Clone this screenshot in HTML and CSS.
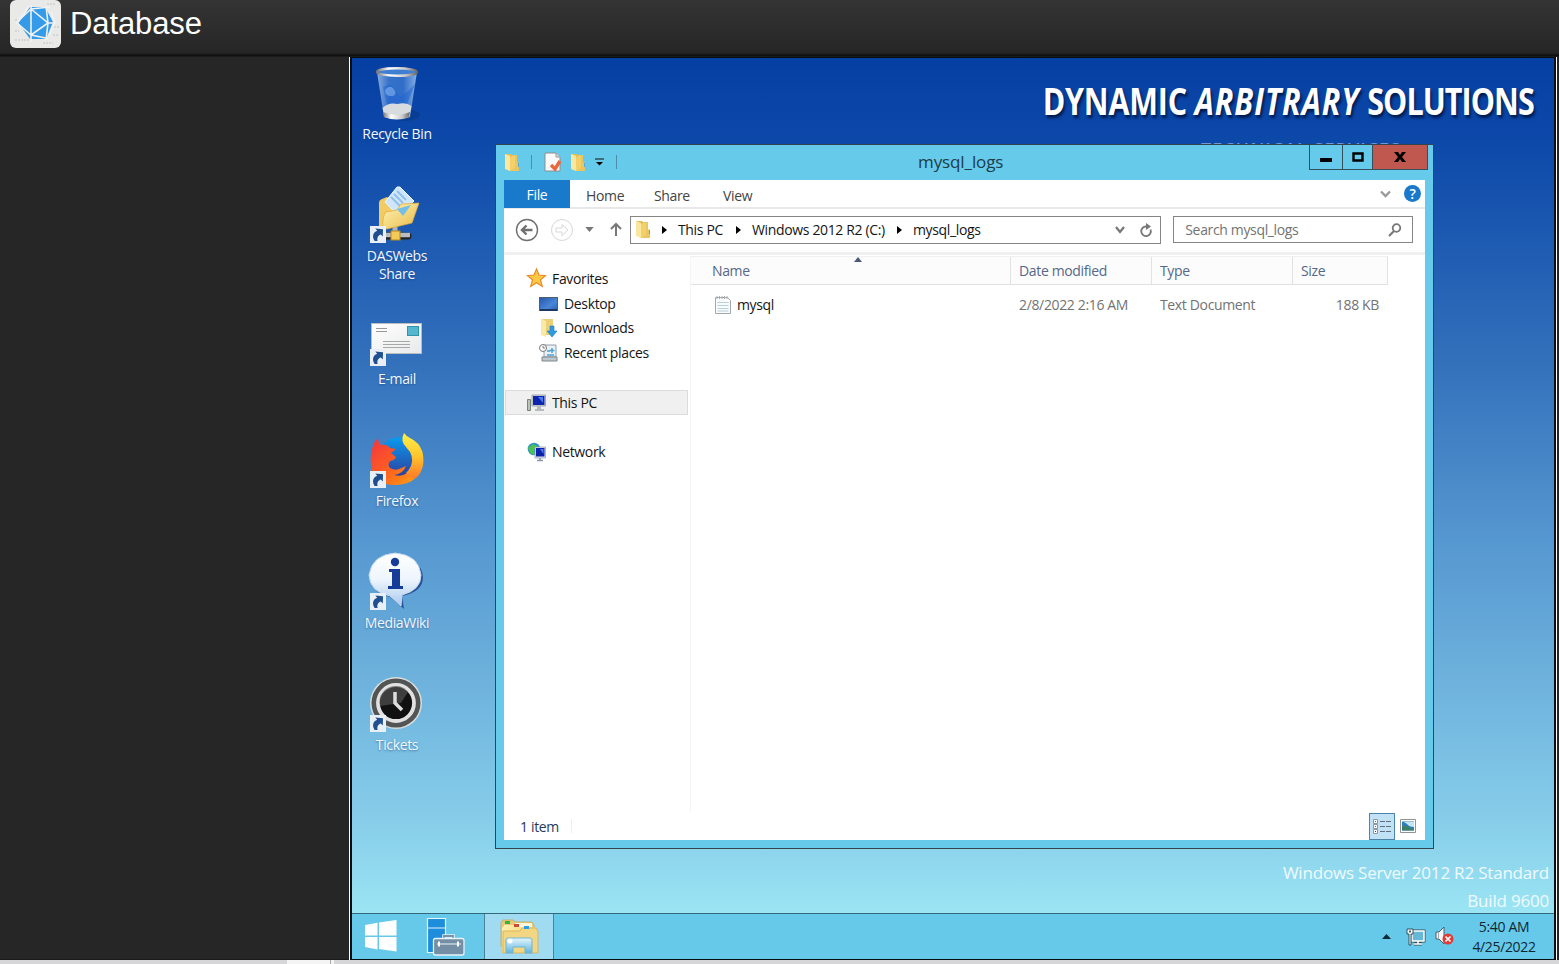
FILE: index.html
```html
<!DOCTYPE html>
<html lang="en">
<head>
<meta charset="utf-8">
<title>Database</title>
<link rel="stylesheet" href="styles.css">
</head>
<body>
<svg class="defs" width="0" height="0" aria-hidden="true">
  <defs>
    <linearGradient id="gold" x1="0" y1="0" x2="1" y2="1"><stop offset="0" stop-color="#fff3b4"/><stop offset="1" stop-color="#e8bb4a"/></linearGradient>
    <linearGradient id="steel" x1="0" y1="0" x2="1" y2="0"><stop offset="0" stop-color="#777"/><stop offset=".3" stop-color="#fff"/><stop offset=".7" stop-color="#ccc"/><stop offset="1" stop-color="#666"/></linearGradient>
    <linearGradient id="glass" x1="0" y1="0" x2="1" y2="0"><stop offset="0" stop-color="#a9c9ef" stop-opacity=".8"/><stop offset=".3" stop-color="#4a86d8" stop-opacity=".7"/><stop offset=".65" stop-color="#3a78d2" stop-opacity=".8"/><stop offset="1" stop-color="#a5caf2" stop-opacity=".8"/></linearGradient>
    <linearGradient id="paper" x1="0" y1="0" x2="1" y2="1"><stop offset="0" stop-color="#fff"/><stop offset="1" stop-color="#e8e9ea"/></linearGradient>
    <linearGradient id="fire" x1="0" y1="0" x2="1" y2="1"><stop offset="0" stop-color="#f0343f"/><stop offset=".45" stop-color="#ff5a25"/><stop offset=".7" stop-color="#ff7a18"/><stop offset="1" stop-color="#ffb31a"/></linearGradient>
    <linearGradient id="flame" x1="0" y1="0" x2="0" y2="1"><stop offset="0" stop-color="#fff14a"/><stop offset=".5" stop-color="#ffc62c"/><stop offset="1" stop-color="#ff7a28"/></linearGradient>
    <linearGradient id="globe" x1="0" y1="0" x2="0" y2="1"><stop offset="0" stop-color="#0a9bee"/><stop offset="1" stop-color="#2c3f9e"/></linearGradient>
    <linearGradient id="bubble" x1="0" y1="0" x2="0" y2="1"><stop offset="0" stop-color="#fff"/><stop offset=".5" stop-color="#eef5fd"/><stop offset="1" stop-color="#a9c9ee"/></linearGradient>
    <linearGradient id="screen" x1="0" y1="0" x2="1" y2="1"><stop offset="0" stop-color="#2457a8"/><stop offset=".6" stop-color="#4a86d8"/><stop offset="1" stop-color="#2a63b8"/></linearGradient>
    <linearGradient id="glassblue" x1="0" y1="0" x2="0" y2="1"><stop offset="0" stop-color="#e3f6ff"/><stop offset="1" stop-color="#5eb4df"/></linearGradient>
    <symbol id="shortcut" viewBox="0 0 16 17">
      <rect width="16" height="17" fill="#e9eff7"/>
      <path d="M4.600 15C1.800 10.500 3 6.300 7.200 4.800L5.300 2.600 13 3.200 12.800 10.600 10.800 8.400C8.200 9.200 6.800 11.500 7.600 15Z" fill="#1f4f8f"/>
    </symbol>
    <symbol id="folder" viewBox="0 0 16 19">
      <path d="M1 1h6l1 1h5v14H1z" fill="#e4bd57"/>
      <path d="M8 2h5v7l2 1v8H6z" fill="#e9c65f"/>
      <path d="M6 5l2-2h3v12l-5 3z" fill="#f4d06b"/>
      <path d="M1 1l5 2v15l-5-2z" fill="#fbe8a0"/>
      <path d="M14.500 10v4" stroke="#58a8d8"/>
    </symbol>
  </defs>
</svg>

<header class="topbar">
  <svg class="brand" viewBox="0 0 51 48">
    <rect width="51" height="48" rx="6" fill="#e9e9e7"/>
    <path d="M5 20h4M5 31h4M5 40h14M44 27h5M43 35h5M33 43h10M37 4h9" stroke="#d6d6d4" stroke-width="2" stroke-dasharray="2 1"/>
    <path d="M20 7h15l8 15-7 17H20L8.500 23z" fill="#359be9"/>
    <path d="M21 5v37M21 9l17 14-17 12M6 23l15-14 19-2M7 23l14 12 17 3.500M36 6l2 17-2 17M38 23h8M19 6L7 23M41 12l4 10-6 14" fill="none" stroke="#f0f2f2" stroke-width="1.600"/>
  </svg>
  <h1>Database</h1>
</header>

<main class="viewer">
  <aside class="gutter"></aside>
  <section class="screen">
    <div class="desktop">
      <div class="icons">
        <div class="shortcut">
          <svg viewBox="0 0 56 56">
            <ellipse cx="35" cy="49" rx="16" ry="6" fill="#07357f" opacity=".5"/>
            <path d="M8 6h40l-7 45q-12 5-26 0z" fill="url(#glass)"/>
            <path d="M14 21q8-5 12 2l5 8 8-6 7-7-8 20H18z" fill="#2264cf" opacity=".55"/>
            <path d="M16 24q6-7 10 1 2 5-4 5t-6-6z" fill="#79a9ec" opacity=".7"/>
            <path d="M13.500 42q6-6 15-4 9-2 14 2l-2 11q-12 4-25 0z" fill="#d9dcdf"/>
            <path d="M14 46q13 6 27 0l-1 5q-12 5-25 0z" fill="url(#steel)"/>
            <ellipse cx="28" cy="6" rx="20" ry="3.800" fill="#3f7fd3" stroke="url(#steel)" stroke-width="2.400"/>
          </svg>
          <span>Recycle Bin</span>
        </div>
        <div class="shortcut">
          <svg viewBox="0 0 56 56">
            <path d="M26 38v10" stroke="#aeb4ba" stroke-width="5"/>
            <path d="M17 48h22" stroke="#222" stroke-width="7" stroke-linecap="round"/>
            <path d="M14 47h27" stroke="#b9bcc0" stroke-width="4.500"/>
            <path d="M10 39V15q0-3 3-4l5-2 6 5 16 4v12z" fill="#f2cb62"/>
            <path d="M28-1h3l14 14-15 16L16 14z" fill="#cfe6fa" stroke="#e9f6ff"/>
            <path d="M28 3l9 9M25 6l9 9M22 9l9 9" stroke="#8fbfec" stroke-width="1.800"/>
            <path d="M14 40q-1-12 3-16l11-2 4-6 18-1-7 20-25 6z" fill="url(#gold)" stroke="#dca836" stroke-width=".7"/>
            <path d="M28 21l14-4-8 11z" fill="#73bfe9"/>
            <rect x="22" y="43" width="9" height="9" fill="#f2ca55" stroke="#b98a1f"/>
            <use href="#shortcut" x="1" y="38" width="16" height="17"/>
          </svg>
          <span>DASWebs<br>Share</span>
        </div>
        <div class="shortcut">
          <svg viewBox="0 0 56 56">
            <rect x="2.500" y="12.500" width="50" height="30" fill="url(#paper)" stroke="#b8bdc2"/>
            <path d="M7 17.500h11M7 20.500h11" stroke="#999" stroke-width="1"/>
            <path d="M14 30.500h27M14 33.500h27M14 36.500h27" stroke="#a8a8a8"/>
            <rect x="38.500" y="15.500" width="11" height="9" fill="#53b7cd" stroke="#2e95ad"/>
            <use href="#shortcut" x="1" y="38" width="16" height="17"/>
          </svg>
          <span>E-mail</span>
        </div>
        <div class="shortcut">
          <svg viewBox="0 0 56 56">
            <circle cx="30" cy="24" r="20" fill="url(#globe)"/>
            <path d="M3 17q1-8 6-12 0 5 3 7 6-1 9 3l6 1-5 4 5 4q-1 3-6 4-3 4 0 7 5 3 9 1l7-3q-3 8-12 9 13 3 18-8 4-12-2-21l7 3 5 9q0 27-27 27Q4 52 2 32 1 22 3 17z" fill="url(#fire)"/>
            <path d="M35 0q-4 8 2 14 9 9 5 19-2 4-5 7 4 6 10 5Q57 36 53.500 19 50 9 41 5 37 3 35 0z" fill="url(#flame)"/>
            <use href="#shortcut" x="1" y="38" width="16" height="17"/>
          </svg>
          <span>Firefox</span>
        </div>
        <div class="shortcut">
          <svg viewBox="0 0 56 56">
            <path d="M33 41l2 13-14-12Q2 38 2 22 4 2 28 0q24 3 26 22 0 15-21 19z" fill="#173a86" opacity=".75"/>
            <path d="M33 40l-1 11-11-10Q1 37 0 20 3 0 26-2q24 2 26 22 0 15-19 20z" fill="url(#bubble)" stroke="#c5d8ee"/>
            <circle cx="26" cy="7" r="4.200" fill="#173b98"/>
            <path d="M20 14h11v17h3v3H19v-3h4V17h-3z" fill="#173b98"/>
            <use href="#shortcut" x="1" y="38" width="16" height="17"/>
          </svg>
          <span>MediaWiki</span>
        </div>
        <div class="shortcut">
          <svg viewBox="0 0 56 56">
            <circle cx="27" cy="26" r="26" fill="#d9dcdc"/>
            <circle cx="27" cy="26" r="24.500" fill="#535554"/>
            <circle cx="27" cy="26" r="18" fill="#111" stroke="#e1e1e1" stroke-width="3.800"/>
            <path d="M11 29a16 16 0 0 1 28-14l-7 11z" fill="#515151" opacity=".7"/>
            <path d="M26 15v11l7 7" fill="none" stroke="#ddd" stroke-width="3.500"/>
            <use href="#shortcut" x="1" y="38" width="16" height="17"/>
          </svg>
          <span>Tickets</span>
        </div>
      </div>

      <div class="wallpaper-title"><span>DYNAMIC <i>ARBITRARY</i> <b>SOLUTIONS</b></span></div>
      <div class="wallpaper-sub">TECHNICAL SERVICES</div>
      <div class="watermark"><span>Windows Server 2012 R2 Standard</span><br><span>Build 9600</span></div>

      <section class="window">
        <div class="titlebar">
          <div class="quick">
            <svg class="fold" viewBox="0 0 16 19"><use href="#folder"/></svg>
            <i class="sep"></i>
            <svg class="props" viewBox="0 0 18 20"><path d="M1 1h11l4 4v14H1z" fill="#fafafa" stroke="#8d8d8d"/><path d="M12 1v4h4" fill="#ddd" stroke="#999"/><path d="M7 13l4 4 5-8" fill="none" stroke="#e9693b" stroke-width="3.400"/></svg>
            <svg class="fold" viewBox="0 0 16 19"><use href="#folder"/></svg>
            <svg class="more" viewBox="0 0 9 8"><path d="M0 1h9" stroke="#111"/><path d="M1 4h7L4.500 7.500z" fill="#000"/></svg>
            <i class="sep"></i>
          </div>
          <div class="caption">mysql_logs</div>
          <div class="controls">
            <b class="min"><svg viewBox="0 0 12 4"><path d="M0 0h12v4H0z"/></svg></b>
            <b class="max"><svg viewBox="0 0 12 10"><path d="M1.500 1.500h9v7h-9z" fill="none" stroke="#000" stroke-width="2.400"/></svg></b>
            <b class="close"><svg viewBox="0 0 12 10"><path d="M0 0h4l2 3 2-3h4L8 5l4 5H8L6 7l-2 3H0l4-5z"/></svg></b>
          </div>
        </div>
        <div class="client">
          <nav class="tabs">
            <span class="file">File</span><span class="home">Home</span><span class="share">Share</span><span class="view">View</span>
            <div class="tabs-end">
              <svg width="11" height="8" viewBox="0 0 11 8"><path d="M1 1.500l4.500 4.500L10 1.500" fill="none" stroke="#999" stroke-width="2.300"/></svg>
              <span class="help">?</span>
            </div>
          </nav>
          <div class="address">
            <svg class="nav" width="24" height="24" viewBox="0 0 24 24" fill="none" stroke="#707070"><circle cx="12" cy="12" r="10.500" stroke-width="1.400"/><path d="M17.500 12H8M11.500 7.500L7 12l4.500 4.500" stroke-width="2.400"/></svg>
            <svg class="nav fwd" width="24" height="24" viewBox="0 0 24 24" fill="none" stroke="#d7d7d7"><circle cx="12" cy="12" r="10.500"/><path d="M6 10h6V6.500l6 5.500-6 5.500V14H6z"/></svg>
            <svg class="drop" width="9" height="5" viewBox="0 0 10 6"><path d="M0 0h10L5 6z" fill="#777"/></svg>
            <svg class="up" width="12" height="15" viewBox="0 0 12 15"><path d="M6 14V2M1 7l5-5 5 5" fill="none" stroke="#777" stroke-width="2"/></svg>
            <div class="crumbs">
              <svg class="fold" viewBox="0 0 16 19"><use href="#folder"/></svg>
              <svg class="tri" viewBox="0 0 5 8"><path d="M0 0l5 4-5 4z"/></svg><span class="c1">This PC</span>
              <svg class="tri" viewBox="0 0 5 8"><path d="M0 0l5 4-5 4z"/></svg><span class="c2">Windows 2012 R2 (C:)</span>
              <svg class="tri" viewBox="0 0 5 8"><path d="M0 0l5 4-5 4z"/></svg><span class="c3">mysql_logs</span>
              <div class="crumb-end">
                <svg width="10" height="8" viewBox="0 0 10 8"><path d="M1 1l4 5 4-5" fill="none" stroke="#777" stroke-width="2.200"/></svg>
                <svg width="12" height="14" viewBox="0 0 12 14"><path d="M10.500 6.500A4.800 4.800 0 1 1 6 3.500h2" fill="none" stroke="#777" stroke-width="1.800"/><path d="M6 0l5 3.500L6 7z" fill="#777"/></svg>
              </div>
            </div>
            <div class="search"><span>Search mysql_logs</span><svg width="14" height="14" viewBox="0 0 14 14"><circle cx="8.500" cy="5" r="3.800" fill="none" stroke="#777" stroke-width="1.800"/><path d="M6 8l-5 5" stroke="#777" stroke-width="2.200"/></svg></div>
          </div>
          <div class="panes">
            <div class="tree">
              <div class="node"><svg viewBox="0 0 19 18"><path d="M9.500-1l2.500 6 6.500.6-5 4.200 1.800 6.700-5.800-3.700-5.800 3.700 1.800-6.700-5-4.200L7 5z" fill="#fdc843" stroke="#e78b28" stroke-width="1.200"/></svg><span>Favorites</span></div>
              <div class="node child"><svg viewBox="0 0 19 18"><rect x=".5" y="2.500" width="18" height="13" fill="url(#screen)" stroke="#4e5e74"/><path d="M1 15h17" stroke="#1d3765" stroke-width="2"/></svg><span>Desktop</span></div>
              <div class="node child"><svg viewBox="0 0 19 18"><path d="M2 0h12v16H2z" fill="#ecd078"/><path d="M2 0l5 2v16l-5-2z" fill="#fae9a5"/><path d="M11 7h4v5h3l-5 6-5-6h3z" fill="#2d9be0" stroke="#2577b9" stroke-width=".6"/></svg><span>Downloads</span></div>
              <div class="node child"><svg viewBox="0 0 19 18"><path d="M5 1h12v12H5z" fill="#edf1f4" stroke="#909ca5"/><path d="M3 13h15v4H3z" fill="#bec7cd" stroke="#7e878d"/><circle cx="4" cy="4" r="3.500" fill="#fff" stroke="#777"/><path d="M4 2v2h2" stroke="#777" fill="none"/><path d="M8 7h3M13 4v5M10.500 6.500h5M8 11h7" stroke="#45a2d9" stroke-width="1.500"/></svg><span>Recent places</span></div>
              <div class="node selected"><svg viewBox="0 0 19 18"><path d="M.5 5.500h3v11h-3z" fill="#b7c3b6" stroke="#788379"/><path d="M5 1h13.500v11H5z" fill="#d9dde0" stroke="#8e969d" stroke-width=".8"/><path d="M6 2h11.500v9H6z" fill="#0d24ad"/><path d="M11 3h5v6z" fill="#4c78f0"/><path d="M10 12h4v3h3v2H8v-2h2z" fill="#b6bbc0"/></svg><span>This PC</span></div>
              <div class="node"><svg viewBox="0 0 19 18"><circle cx="7" cy="6" r="6.300" fill="#2c95cc"/><path d="M1 5l5-4 4 2-3 4 1 5-4-1-2-4z" fill="#4ec24b"/><path d="M8 4h10.500v11H8z" fill="#e0e4ea" stroke="#8e9bb0" stroke-width=".7"/><path d="M9 5h8.500v8.500H9z" fill="#0b22aa"/><path d="M13 6h3.500v5z" fill="#4c78f0"/><path d="M13 15v2M10 17.500h6" stroke="#8c98a4" stroke-width="1.500" fill="none"/></svg><span>Network</span></div>
            </div>
            <div class="files">
              <div class="row head">
                <span>Name</span><span>Date modified</span><span>Type</span><span>Size</span>
                <svg class="sort" width="8" height="5" viewBox="0 0 8 5"><path d="M4 0l4 5H0z" fill="#4a5a78"/></svg>
              </div>
              <div class="row item">
                <span class="name"><svg width="16" height="19" viewBox="0 0 16 19"><path d="M.5 2.500h12l3 3v13H.5z" fill="#f8fafb" stroke="#a3a9ad"/><path d="M2 1v3M4.500 1v3M7 1v3M9.500 1v3M12 1v3" stroke="#a8adb0"/><path d="M2.500 7.500h11M2.500 10.500h11M2.500 13.500h11M2.500 16h11" stroke="#b8d0dc"/></svg>mysql</span>
                <span>2/8/2022 2:16 AM</span><span>Text Document</span><span class="size">188 KB</span>
              </div>
            </div>
          </div>
          <footer class="status">
            <span>1 item</span><i></i>
            <div class="modes">
              <b class="details"><svg width="18" height="15" viewBox="0 0 18 15"><g fill="#fff" stroke="#8b98a3"><path d="M.5.500h4v4h-4zM.5 5.500h4v4h-4zM.5 10.500h4v4h-4z"/></g><path d="M2 2.500h1" stroke="#3b8b3b"/><path d="M2 7.500h1" stroke="#c33"/><path d="M2 12.500h1" stroke="#33a"/><path d="M7 2.500h5M13 2.500h5M7 7.500h5M13 7.500h5M7 12.500h5M13 12.500h5" stroke="#5d6f7e"/></svg></b>
              <svg width="16" height="14" viewBox="0 0 16 14"><path d="M.5.500h15v13H.5z" fill="#fff" stroke="#929292"/><path d="M2 2.500h12v9H2z" fill="#2b81bb"/><path d="M4 3h10v5q-5 0-7-3z" fill="#c5e5f5"/><path d="M2 7q7-1 12 4.500H2z" fill="#3d7f6d"/></svg>
            </div>
          </footer>
        </div>
      </section>
    </div>

    <div class="taskbar">
      <svg class="start" width="34" height="33" viewBox="0 0 34 33"><path d="M1 5l12.500-2.200v12.700H1zM15 2.500L32.500 0v15.500H15zM1 17h12.500v12.500L1 27zM15 17h17.500v14.500L15 29z" fill="#fff"/></svg>
      <svg class="manager" width="39" height="40" viewBox="0 0 39 40"><path d="M1.500 1.500h18v34h-18z" fill="#1e8ddc" stroke="#e8f6ff" stroke-width="1.200"/><path d="M1 11h19" stroke="#dff2ff"/><path d="M18 21v-2h9v2" fill="none" stroke="#e8f2f8" stroke-width="3.500"/><path d="M18 21v-2h9v2" fill="none" stroke="#7892a7" stroke-width="1.800"/><rect x="7.500" y="21.500" width="30.500" height="16.500" rx="2" fill="#748fa5" stroke="#e8f2f8" stroke-width="1.300"/><path d="M11 27h24" stroke="#eef6fa"/><path d="M13 24.500v5M32 24.500v5" stroke="#fff" stroke-width="2"/></svg>
      <div class="task">
        <svg width="39" height="36" viewBox="0 0 39 36"><path d="M1 4l2-3h10l2 2h17l2 3v21H1z" fill="#e7c977" stroke="#c8a346" stroke-width=".7"/><path d="M5 2h5v3H5z" fill="#32b642"/><path d="M4 6h10l2-2h16v6H4z" fill="#fff6db"/><path d="M2 9l3-3h9l2 2h20v26H2z" fill="url(#gold)"/><path d="M14 5h5v3h-5z" fill="#d14a35"/><path d="M3 12h17l2-3h14l2 3v22H3z" fill="#f2d682" stroke="#cfa94e" stroke-width=".7"/><path d="M24 7h5v3h-5z" fill="#299fe4"/><path d="M6 34V21q0-2 2-2h22q2 0 2 2v13h-7v-6H13v6z" fill="url(#glassblue)" stroke="#6fb5d4"/><circle cx="10" cy="22" r="2.500" fill="#fff"/></svg>
      </div>
      <div class="tray">
        <svg width="9" height="5" viewBox="0 0 9 5"><path d="M4.500 0L9 5H0z" fill="#102a38"/></svg>
        <svg class="net" width="19" height="18" viewBox="0 0 19 18"><path d="M6 3h12v10H6zM8 16h8M12 13v3" fill="#67b8d6" stroke="#31505f" stroke-width="3"/><path d="M6 3h12v10H6zM8 16h8M12 13v3" fill="#67b8d6" stroke="#fff" stroke-width="1.500"/><path d="M1 1h6v5H5v11H3V6H1z" fill="#fff" stroke="#31505f"/><path d="M3 2.500h2v2H3z" fill="#47616e"/></svg>
        <svg class="vol" width="19" height="19" viewBox="0 0 19 19"><path d="M1 5h3l5-5v17l-5-5H1z" fill="#f5f5f5" stroke="#4a5e69"/><path d="M3.500 5v7" stroke="#9aa9b1"/><circle cx="13" cy="12" r="5.500" fill="#e23a35"/><path d="M10.500 9.500l5 5M15.500 9.500l-5 5" stroke="#fff" stroke-width="1.700"/></svg>
        <div class="clock"><span>5:40 AM</span><br><span>4/25/2022</span></div>
      </div>
    </div>
  </section>
</main>
<div class="bottom-strip"><i></i><i></i></div>
</body>
</html>
```
FILE: styles.css
```css
* { box-sizing: border-box; }
body { margin: 0; width: 1559px; height: 964px; overflow: hidden; display: flex; flex-direction: column; background: #252525; font: 14px/18px "Open Sans", "Noto Sans", sans-serif; letter-spacing: -.35px; color: #151515; }
svg { display: block; flex: none; overflow: visible; }
span { white-space: nowrap; }
.defs { position: absolute; }

.topbar { flex: none; height: 57px; display: flex; align-items: flex-start; padding-left: 10px; background: linear-gradient(#343434, #262626 53px, #111 55px, #111 56px, #252525 57px); }
.brand { width: 51px; height: 48px; }
.topbar h1 { margin: 6px 0 0 9px; font: 31px/36px "Liberation Sans", Arial, sans-serif; letter-spacing: -.1px; color: #fff; }

.viewer { flex: none; height: 903px; display: flex; }
.gutter { width: 349px; background: #262626; border-bottom: 1px solid #1b1b1b; }
.screen { width: 1208px; height: 903px; display: flex; flex-direction: column; background: #080d12; border-left: 1px solid #fff; border-right: 1px solid #fff; padding: 1px 2px 1px 2px; }
.desktop { position: relative; height: 855px; background: linear-gradient(#053fa3 0, #0d49a9 85px, #1a57b0 165px, #3472bc 310px, #5597d0 480px, #72b7df 650px, #8ad1eb 780px, #9be5f4 855px); }

.icons { width: 90px; padding-top: 8px; }
.shortcut { height: 122.4px; display: flex; flex-direction: column; align-items: center; color: #f2f7ff; text-align: center; text-shadow: 0 1px 2px #123a7288; }
.shortcut svg { width: 56px; height: 56px; margin-bottom: 3px; }
.shortcut:nth-child(n+5) svg { margin-top: -1px; }

.wallpaper-title { position: absolute; top: 18px; right: 20px; font: 700 37px/50px "Open Sans", sans-serif; letter-spacing: -.2px; color: #fff; text-shadow: 2px 3px 3px #001c50; }
.wallpaper-title span { display: block; transform: scaleX(.823); transform-origin: right; }
.wallpaper-title i { letter-spacing: 1.2px; }
.wallpaper-title b { font-weight: 700; letter-spacing: -1.1px; }
.wallpaper-sub { position: absolute; top: 79px; left: 849px; font: 600 18px/24px "Open Sans", sans-serif; letter-spacing: 1px; color: #7298d0; }
.watermark { position: absolute; right: 5px; top: 801px; color: #effaff; text-align: right; font-size: 17px; letter-spacing: -.2px; line-height: 28px; }

.window { position: absolute; left: 143px; top: 86px; width: 939px; height: 705px; background: #66caea; border: 1px solid #34444e; display: flex; flex-direction: column; padding: 0 8px 8px; }
.titlebar { height: 35px; display: flex; align-items: flex-start; justify-content: space-between; position: relative; }
.quick { display: flex; align-items: center; height: 34px; }
.fold { width: 16px; height: 19px; }
.sep { width: 1px; height: 14px; background: #4e8da7; margin-left: 11px; }
.props { width: 18px; height: 20px; margin: 0 8px 0 12px; }
.more { width: 9px; height: 8px; margin-left: 9px; }
.quick .more + .sep { margin-left: 12px; }
.caption { position: absolute; left: 414px; top: 5px; font-size: 17px; letter-spacing: -.1px; line-height: 24px; color: #1c3d49; }
.controls { display: flex; height: 25px; margin-right: -3px; border: 1px solid #34505c; border-top: 0; }
.controls b { display: flex; justify-content: center; align-items: center; border-right: 1px solid #34505c; }
.controls svg { width: 12px; height: 10px; }
.controls .min { width: 33px; }
.controls .min svg { height: 4px; margin-top: 6px; }
.controls .max { width: 30px; }
.controls .close { width: 54px; background: #c1584f; border: 0; }

.client { height: 660px; display: flex; flex-direction: column; background: #fff; }
.tabs { height: 29px; display: flex; align-items: center; border-bottom: 2px solid #e8e8e8; color: #444; }
.tabs .file { align-self: stretch; width: 66px; line-height: 29px; background: #1979ca; color: #fff; text-align: center; height: 28px; }
.tabs .home { width: 35px; margin: 4px 0 0 16px; }
.tabs .share { width: 34px; margin: 4px 0 0 33px; }
.tabs .view { margin: 4px 0 0 35px; }
.tabs-end { margin-left: auto; display: flex; align-items: center; gap: 13px; padding-right: 4px; }
.help { width: 17px; height: 17px; border-radius: 50%; background: #1979ca; color: #fff; font-weight: 600; line-height: 17px; text-align: center; }

.address { height: 46px; display: flex; align-items: center; padding: 0 12px 2px 11px; border-bottom: 3px solid #f0f0f0; }
.address .fwd { margin-left: 11px; }
.address .drop { margin-left: 11px; }
.address .up { margin-left: 16px; }
.crumbs { width: 532px; height: 28px; margin-left: 8px; border: 1px solid #858585; display: flex; align-items: center; padding-left: 4px; }
.tri { width: 5px; height: 8px; }
.crumbs .fold + .tri { margin-left: 11px; }
.crumbs span { margin-left: 11px; }
.c1 { width: 47px; margin-right: 11px; }
.c2 { width: 134px; margin-right: 11px; }
.c2 + .tri + .c3 { margin-left: 11px; }
.crumb-end { margin-left: auto; display: flex; align-items: center; gap: 15px; padding-right: 8px; }
.search { width: 240px; height: 27px; margin-left: 12px; border: 1px solid #858585; display: flex; align-items: center; justify-content: space-between; padding: 0 10px 0 11px; color: #737373; }

.panes { height: 557px; display: flex; }
.tree { width: 187px; padding: 12px 2px 0 1px; border-right: 1px solid #f5f5f5; }
.node { height: 24.6px; display: flex; align-items: center; padding-left: 22px; gap: 6px; }
.node svg { width: 19px; height: 18px; }
.node.child { padding-left: 34px; }
.node.selected { margin: 24.6px 0; background: #f0f0f0; border: 1px solid #dcdcdc; padding: 1px 0 0 21px; }
.node.selected + .node { padding-top: 1px; }
.files { width: 734px; padding: 1px 0 0; }
.row { display: grid; grid-template-columns: 320px 141px 141px 95px; width: 697px; align-items: center; }
.head { height: 29px; color: #55688a; position: relative; background: #fcfcfc; border-top: 1px solid #f0f0f0; border-bottom: 1px solid #e2e2e2; }
.head span { height: 27px; line-height: 27px; border-right: 1px solid #e2e2e2; padding-left: 8px; }
.head span:first-child { padding-left: 21px; }
.sort { position: absolute; left: 163px; top: 0; }
.item { height: 39px; color: #737373; }
.item span { padding-left: 8px; }
.item .name { padding-left: 24px; display: flex; align-items: center; gap: 6px; color: #151515; }
.item .size { text-align: right; padding-right: 9px; }
.status { height: 28px; display: flex; align-items: center; padding-left: 16px; color: #26395a; }
.status span { margin-top: 2px; }
.status i { width: 1px; height: 14px; background: #eee; margin-left: 12px; }
.modes { margin-left: auto; display: flex; align-items: center; gap: 5px; padding-right: 9px; }
.details { width: 26px; height: 27px; border: 1px solid #4b86a8; background: #c1e2f4; display: flex; align-items: center; justify-content: center; }

.taskbar { height: 46px; flex: none; display: flex; align-items: center; background: #66c9e9; border-top: 1px solid #35677a; }
.start { margin-left: 12px; }
.manager { margin-left: 28px; }
.task { width: 70px; height: 45px; margin-left: 19px; border: 1px solid #4b8298; border-width: 0 1px; background: #a0dbf1; display: flex; align-items: center; justify-content: center; }
.tray { margin-left: auto; display: flex; align-items: center; padding-right: 15px; color: #102833; }
.net { margin-left: 15px; }
.vol { margin-left: 10px; }
.clock { width: 70px; margin-left: 15px; text-align: center; line-height: 20px; }

.bottom-strip { flex: none; height: 4px; background: #d6d5d7; display: flex; padding-left: 287px; }
.bottom-strip i { width: 44px; background: #f4f4f4; border-right: 1px solid #aaa; }
.bottom-strip i + i { width: 3px; border: 0; }
```
